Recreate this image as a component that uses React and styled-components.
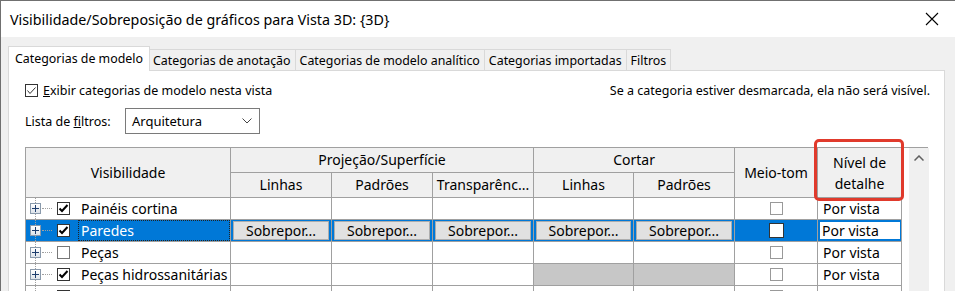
import React from 'react'
import styled, { createGlobalStyle, css } from 'styled-components'

const GlobalStyle = createGlobalStyle`
  html, body { margin: 0; padding: 0; background: #f0f0f0; }
  body { font-family: "Noto Sans", "Open Sans", sans-serif; color: #000; }
`

const tabs = [
  'Categorias de modelo',
  'Categorias de anotação',
  'Categorias de modelo analítico',
  'Categorias importadas',
  'Filtros',
]

const rows = [
  { name: 'Painéis cortina', checked: true },
  { name: 'Paredes', checked: true, selected: true },
  { name: 'Peças', checked: false },
  { name: 'Peças hidrossanitárias', checked: true, hatched: true },
  { name: '', checked: true, partial: true },
]

const Window = styled.div`
  width: 955px;
  height: 291px;
  box-sizing: border-box;
  border-left: 1px solid #707070;
  border-top: 1px solid #707070;
  background: #f0f0f0;
  display: flex;
  flex-direction: column;
  overflow: hidden;
`

const TitleBar = styled.div`
  height: 36px;
  flex: none;
  background: #fff;
  display: flex;
  align-items: center;
  justify-content: space-between;
  padding-left: 9px;
  font-size: 14.3px;
`

const CloseButton = styled.div`
  width: 46px;
  height: 36px;
  display: flex;
  align-items: center;
  justify-content: center;
`

const Body = styled.div`
  flex: 1;
  display: flex;
  flex-direction: column;
  padding: 9px 10px 0 7px;
`

const TabStrip = styled.div`
  display: flex;
  align-items: flex-end;
  height: 24px;
  padding-left: 2px;
`

const Tab = styled.div`
  height: 21px;
  box-sizing: border-box;
  padding: 0 4px;
  display: flex;
  align-items: center;
  font-size: 12.4px;
  background: #f0f0f0;
  border: 1px solid #d9d9d9;
  border-bottom: none;
  margin-left: -1px;
  white-space: nowrap;
  ${(p) =>
    p.$active &&
    css`
      height: 25px;
      margin: 0 -1px -1px -2px;
      padding: 0 6px 2px;
      background: #fff;
      position: relative;
      z-index: 1;
    `}
`

const Panel = styled.div`
  flex: 1;
  background: #fff;
  border: 1px solid #d9d9d9;
  border-bottom: none;
  padding: 11px 14px 0 16px;
`

const TopRow = styled.div`
  display: flex;
  align-items: center;
  justify-content: space-between;
  height: 16px;
  font-size: 12.5px;
`

const CheckLabel = styled.label`
  display: flex;
  align-items: center;
  gap: 5px;
`

const Box = styled.span`
  width: 13px;
  height: 13px;
  box-sizing: border-box;
  border: 1px solid ${(p) => (p.$light ? '#777' : '#333')};
  background: #fff;
  display: inline-flex;
  align-items: center;
  justify-content: center;
  flex: none;
`

const FilterRow = styled.div`
  display: flex;
  align-items: center;
  margin-top: 10px;
  font-size: 12.5px;
`

const FilterLabel = styled.span`
  width: 100px;
  flex: none;
`

const Select = styled.div`
  width: 135px;
  height: 26px;
  box-sizing: border-box;
  border: 1px solid #7a7a7a;
  display: flex;
  align-items: center;
  justify-content: space-between;
  padding: 0 7px 0 6px;
  font-size: 13px;
`

const GridFrame = styled.div`
  margin-top: 13px;
  display: flex;
  width: 903px;
  border-top: 1px solid #a0a0a0;
`

const Table = styled.table`
  border-collapse: collapse;
  table-layout: fixed;
  width: 876px;
  font-size: 14px;
  border-left: 1px solid #a0a0a0;
`

const Head = styled.th`
  font-weight: normal;
  background: #f0f0f0;
  border: 1px solid #a0a0a0;
  border-top: none;
  height: 24px;
  padding: 0 2px;
  text-align: center;
  line-height: ${(p) => (p.$twoLine ? '21px' : '22px')};
  white-space: ${(p) => (p.$twoLine ? 'normal' : 'nowrap')};
  position: relative;
`

const Highlight = styled.span`
  position: absolute;
  left: -4px;
  top: -9px;
  right: -3px;
  bottom: -4px;
  border: 3px solid #e03a2c;
  border-radius: 5px;
  pointer-events: none;
`

const Cell = styled.td`
  height: 21px;
  padding: 0;
  border: 1px solid #a0a0a0;
  border-top: none;
  ${(p) => p.$selected && css`background: #0078d7;`}
  ${(p) =>
    p.$hatched &&
    css`
      background: repeating-conic-gradient(#9a9a9a 0 25%, #f4f4f4 0 50%) 0 0 / 2px 2px;
    `}
`

const TreeItem = styled.div`
  display: flex;
  align-items: center;
  height: 21px;
  padding-left: 4px;
  position: relative;
  color: ${(p) => (p.$selected ? '#fff' : '#000')};
`

const Expander = styled.span`
  width: 11px;
  height: 11px;
  box-sizing: border-box;
  border: 1px solid #8a9aac;
  background: linear-gradient(#fff, #dde3ea);
  display: inline-flex;
  align-items: center;
  justify-content: center;
  position: relative;
  z-index: 1;
`

const DotLine = styled.span`
  width: 10px;
  border-top: 1px dotted #a0a0a0;
  margin: 0 5px 0 1px;
`

const VLine = styled.span`
  position: absolute;
  left: 9px;
  top: 0;
  bottom: 0;
  border-left: 1px dotted #a0a0a0;
`

const Name = styled.span`
  margin-left: 9px;
  padding: 0 2px;
  flex: 1;
  align-self: stretch;
  display: flex;
  align-items: center;
  ${(p) => p.$focus && css`border: 1px dotted #222; margin-left: 8px;`}
`

const OverrideButton = styled.div`
  margin: 1px 2px;
  height: 19px;
  box-sizing: border-box;
  background: #e1e1e1;
  border: 1px solid #adadad;
  display: flex;
  align-items: center;
  justify-content: center;
  font-size: 14px;
`

const CenterBox = styled.div`
  display: flex;
  align-items: ${(p) => (p.$top ? 'flex-start' : 'center')};
  padding-top: ${(p) => (p.$top ? '4px' : '0')};
  box-sizing: border-box;
  justify-content: center;
  height: 21px;
`

const HalfBox = styled.span`
  width: ${(p) => (p.$big ? 15 : 13)}px;
  height: ${(p) => (p.$big ? 15 : 13)}px;
  box-sizing: border-box;
  border: 1px solid ${(p) => (p.$big ? '#333' : '#999')};
  background: #fff;
  display: inline-block;
`

const DetailText = styled.div`
  height: 21px;
  display: flex;
  align-items: center;
  padding-left: 5px;
  box-sizing: border-box;
  ${(p) =>
    p.$edit &&
    css`
      background: #fff;
      border: 2px solid #0078d7;
      border-right-width: 1px;
      padding-left: 2px;
    `}
`

const Gap = styled.div`
  width: 7px;
  flex: none;
`

const Scrollbar = styled.div`
  width: 20px;
  flex: none;
  background: #f0f0f0;
  display: flex;
  justify-content: center;
  padding-top: 7px;
  height: 145px;
`

const Check = () => (
  <svg width="11" height="11" viewBox="0 0 11 11">
    <path d="M1.5 5.5 L4 8 L9.5 2" fill="none" stroke="#000" strokeWidth="2" />
  </svg>
)

const ThinCheck = () => (
  <svg width="11" height="11" viewBox="0 0 11 11">
    <path d="M1.5 5.5 L4 8.5 L9.5 2.5" fill="none" stroke="#333" strokeWidth="1" />
  </svg>
)

const Plus = () => (
  <svg width="9" height="9" viewBox="0 0 9 9">
    <path d="M1 4.5 H8 M4.5 1 V8" stroke="#1e3e6e" strokeWidth="1" />
  </svg>
)

const cols = [205, 101, 101, 101, 100, 101, 83, 84]

export default function App() {
  return (
    <>
      <GlobalStyle />
      <Window>
        <TitleBar>
          <span>Visibilidade/Sobreposição de gráficos para Vista 3D: {'{3D}'}</span>
          <CloseButton>
            <svg width="14" height="14" viewBox="0 0 14 14">
              <path d="M1 1 L13 13 M13 1 L1 13" stroke="#000" strokeWidth="1.1" />
            </svg>
          </CloseButton>
        </TitleBar>
        <Body>
          <TabStrip>
            {tabs.map((t, i) => (
              <Tab key={t} $active={i === 0}>
                {t}
              </Tab>
            ))}
          </TabStrip>
          <Panel>
            <TopRow>
              <CheckLabel>
                <Box>
                  <ThinCheck />
                </Box>
                <span>
                  <u>E</u>xibir categorias de modelo nesta vista
                </span>
              </CheckLabel>
              <span>Se a categoria estiver desmarcada, ela não será visível.</span>
            </TopRow>
            <FilterRow>
              <FilterLabel>
                Lista de <u>f</u>iltros:
              </FilterLabel>
              <Select>
                <span>Arquitetura</span>
                <svg width="10" height="6" viewBox="0 0 10 6">
                  <path d="M0.5 0.5 L5 5 L9.5 0.5" fill="none" stroke="#444" strokeWidth="1" />
                </svg>
              </Select>
            </FilterRow>
            <GridFrame>
              <Table>
                <colgroup>
                  {cols.map((w, i) => (
                    <col key={i} style={{ width: w }} />
                  ))}
                </colgroup>
                <thead>
                  <tr>
                    <Head rowSpan={2}>Visibilidade</Head>
                    <Head colSpan={3}>Projeção/Superfície</Head>
                    <Head colSpan={2}>Cortar</Head>
                    <Head rowSpan={2}>Meio-tom</Head>
                    <Head rowSpan={2} $twoLine>
                      Nível de
                      <br />
                      detalhe
                      <Highlight />
                    </Head>
                  </tr>
                  <tr>
                    <Head>Linhas</Head>
                    <Head>Padrões</Head>
                    <Head>Transparênc...</Head>
                    <Head>Linhas</Head>
                    <Head>Padrões</Head>
                  </tr>
                </thead>
                <tbody>
                  {rows.map((r, i) => (
                    <tr key={i}>
                      <Cell $selected={r.selected}>
                        <TreeItem $selected={r.selected}>
                          <VLine />
                          {!r.partial && (
                            <>
                              <Expander>
                                <Plus />
                              </Expander>
                              <DotLine />
                            </>
                          )}
                          <Box
                            $light={!r.checked}
                            style={r.partial ? { marginLeft: 27, alignSelf: 'flex-start', marginTop: 4 } : undefined}
                          >
                            {r.checked && <Check />}
                          </Box>
                          <Name $focus={r.selected}>{r.name}</Name>
                        </TreeItem>
                      </Cell>
                      {[0, 1, 2, 3, 4].map((c) => (
                        <Cell key={c} $selected={r.selected} $hatched={r.hatched && c >= 3}>
                          {r.selected && <OverrideButton>Sobrepor...</OverrideButton>}
                        </Cell>
                      ))}
                      <Cell $selected={r.selected}>
                        <CenterBox $top={r.partial}>
                          <HalfBox $big={r.selected} />
                        </CenterBox>
                      </Cell>
                      <Cell $selected={r.selected}>
                        {!r.partial && <DetailText $edit={r.selected}>Por vista</DetailText>}
                      </Cell>
                    </tr>
                  ))}
                </tbody>
              </Table>
              <Gap />
              <Scrollbar>
                <svg width="10" height="6" viewBox="0 0 10 6">
                  <path d="M0.5 5.5 L5 1 L9.5 5.5" fill="none" stroke="#606060" strokeWidth="1.5" />
                </svg>
              </Scrollbar>
            </GridFrame>
          </Panel>
        </Body>
      </Window>
    </>
  )
}
